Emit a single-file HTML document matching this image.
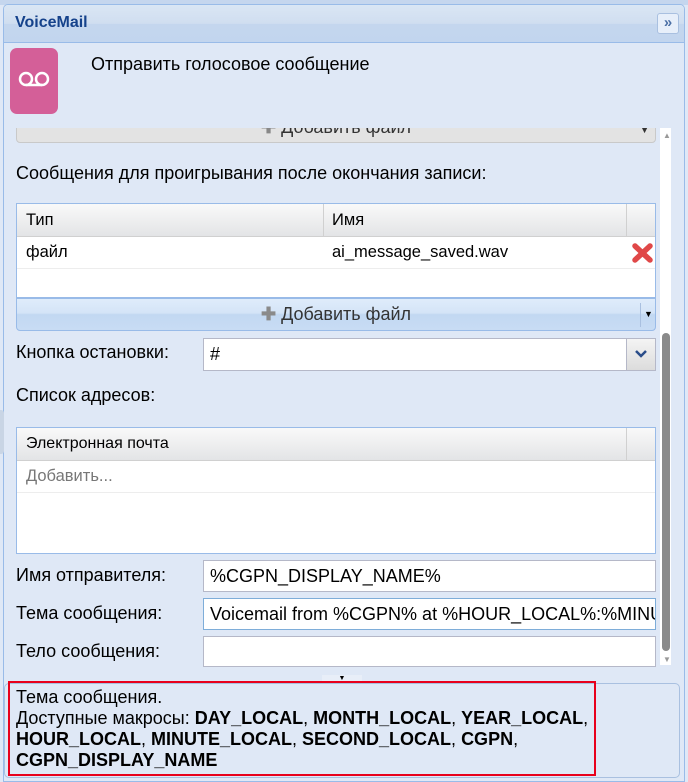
<!DOCTYPE html>
<html><head><meta charset="utf-8"><style>
*{box-sizing:border-box;margin:0;padding:0}
body{width:688px;height:782px;background:#dfe8f6;font-family:"Liberation Sans",sans-serif;font-size:18px;color:#000;position:relative;overflow:hidden}
.a{position:absolute}
.lbl{position:absolute;left:16px;font-size:18px;line-height:20px}
.inp{position:absolute;left:203px;width:453px;background:#fff;border:1px solid #b5b8c8;padding-left:6px;font-size:18px;white-space:nowrap;overflow:hidden}
.grid{position:absolute;left:16px;width:640px;background:#fff;border:1px solid #99bbe8;font-size:16.5px}
.gh{height:33px;background:linear-gradient(#f9f9f9,#e3e4e6);border-bottom:1px solid #d0d0d0;position:relative}
.btn{position:absolute;left:16px;width:640px;border:1px solid #99bbe8;border-radius:0 0 4px 4px;background:linear-gradient(#dfecfb 0,#d4e4f7 45%,#c2d8f2 50%,#c8dcf4 100%);color:#333;font-size:18px;text-align:center}
</style></head><body>
<div class="a" style="left:0;top:0;width:688px;height:5px;background:#c5d6ee"></div>
<div class="a" style="left:3px;top:4px;width:682px;height:778px;border:1px solid #99bbe8;border-radius:5px 5px 0 0;background:#dfe8f6"></div>
<div class="a" style="left:4px;top:5px;width:680px;height:38px;border-radius:4px 4px 0 0;background:linear-gradient(#dae6f4 0,#d0def0 50%,#c4d6ee 52%,#c2d5ee 100%);border-bottom:1px solid #99bbe8"></div>
<div class="a" style="left:15px;top:14px;font-weight:bold;color:#15428b;font-size:16px">VoiceMail</div>
<div class="a" style="left:657px;top:13px;width:22px;height:21px;border:1px solid #a9c0e0;border-radius:3px;background:#e7effa;color:#4a6fa5;font-weight:bold;font-size:15px;text-align:center;line-height:18px">»</div>
<div class="a" style="left:10px;top:48px;width:48px;height:66px;background:#d45f98;border-radius:7px"></div>
<svg class="a" style="left:17px;top:70px" width="34" height="20"><circle cx="9" cy="9" r="6" fill="none" stroke="#fff" stroke-width="2.5"/><circle cx="25" cy="9" r="6" fill="none" stroke="#fff" stroke-width="2.5"/><line x1="9" y1="15" x2="25" y2="15" stroke="#fff" stroke-width="2.5"/></svg>
<div class="a" style="left:91px;top:54px">Отправить голосовое сообщение</div>

<div class="a" style="left:12px;top:128px;width:648px;height:537px;overflow:hidden">
 <div class="a" style="left:4px;top:-17px;width:640px;height:32px;border:1px solid #c9c9c9;border-radius:0 0 4px 4px;background:#e3e3e3;color:#333;text-align:center;line-height:30px"><span style="color:#888;font-weight:bold">✚</span> Добавить файл<span class="a" style="right:6px;top:3px;font-size:9px">▼</span></div>
</div>
<div class="lbl" style="top:163px">Сообщения для проигрывания после окончания записи:</div>
<div class="grid" style="top:203px;height:95px">
 <div class="gh"><span class="a" style="left:9px;top:7px">Тип</span><span class="a" style="left:306px;top:0;height:33px;border-left:1px solid #d0d0d0"></span><span class="a" style="left:315px;top:7px">Имя</span><span class="a" style="left:609px;top:0;height:33px;border-left:1px solid #d0d0d0"></span></div>
 <div style="height:32px;border-bottom:1px solid #ededed;position:relative"><span class="a" style="left:9px;top:6px">файл</span><span class="a" style="left:315px;top:6px">ai_message_saved.wav</span>
 <svg class="a" style="left:613px;top:4px" width="25" height="24"><path d="M5 5L20 19M20 5L5 19" stroke="#e04848" stroke-width="5.5" stroke-linecap="round"/></svg></div>
</div>
<div class="btn" style="top:298px;height:33px;line-height:31px"><span style="color:#8a8a8a;font-weight:bold">✚</span> Добавить файл<span class="a" style="left:623px;top:4px;height:24px;border-left:1px solid #a9c0e0"></span><span class="a" style="left:627px;top:0;font-size:9px;color:#000">▼</span></div>

<div class="lbl" style="top:342px">Кнопка остановки:</div>
<div class="inp" style="top:338px;height:33px;line-height:30px">#<div class="a" style="right:0;top:0;width:29px;height:31px;background:linear-gradient(#f4f4f4,#dcdcdc);border-left:1px solid #b5b8c8"><svg class="a" style="left:8px;top:11px" width="12" height="8"><path d="M1 1L6 6L11 1" fill="none" stroke="#2a4d8a" stroke-width="2.5"/></svg></div></div>
<div class="lbl" style="top:385px">Список адресов:</div>
<div class="grid" style="top:427px;height:127px">
 <div class="gh"><span class="a" style="left:9px;top:7px;font-size:16px">Электронная почта</span><span class="a" style="left:609px;top:0;height:33px;border-left:1px solid #d0d0d0"></span></div>
 <div style="height:32px;border-bottom:1px solid #ededed;position:relative"><span class="a" style="left:9px;top:6px;color:#777">Добавить...</span></div>
</div>
<div class="lbl" style="top:565px">Имя отправителя:</div>
<div class="inp" style="top:560px;height:32px;line-height:30px">%CGPN_DISPLAY_NAME%</div>
<div class="lbl" style="top:603px">Тема сообщения:</div>
<div class="inp" style="top:598px;height:32px;line-height:30px;border-color:#7eadd9">Voicemail from %CGPN% at %HOUR_LOCAL%:%MINUTE_LOCAL%</div>
<div class="lbl" style="top:641px">Тело сообщения:</div>
<div class="inp" style="top:636px;height:31px"></div>

<div class="a" style="left:660px;top:128px;width:11px;height:537px;background:#fff"></div>
<div class="a" style="left:663px;top:131px;font-size:8px;color:#999">▲</div>
<div class="a" style="left:662px;top:333px;width:8px;height:318px;background:#8a8a8a;border-radius:4px"></div>
<div class="a" style="left:663px;top:655px;font-size:8px;color:#999">▼</div>
<div class="a" style="left:0;top:410px;width:4px;height:44px;background:#c9d5e5;border-radius:0 3px 3px 0"></div>

<div class="a" style="left:322px;top:675px;width:40px;height:8px;background:#e8eef8;font-size:7px;text-align:center;line-height:8px">▼</div>
<div class="a" style="left:4px;top:683px;width:676px;height:95px;border:1px solid #a9c0e0;border-radius:5px;background:#dfe8f6"></div>
<div class="a" style="left:8px;top:681px;width:588px;height:95px;border:2px solid #e8001c"></div>
<div class="a" style="left:16px;top:687px;line-height:21px;font-size:18px;white-space:nowrap">Тема сообщения.<br>Доступные макросы: <b>DAY_LOCAL</b>, <b>MONTH_LOCAL</b>, <b>YEAR_LOCAL</b>,<br><b>HOUR_LOCAL</b>, <b>MINUTE_LOCAL</b>, <b>SECOND_LOCAL</b>, <b>CGPN</b>,<br><b>CGPN_DISPLAY_NAME</b></div>
</body></html>
